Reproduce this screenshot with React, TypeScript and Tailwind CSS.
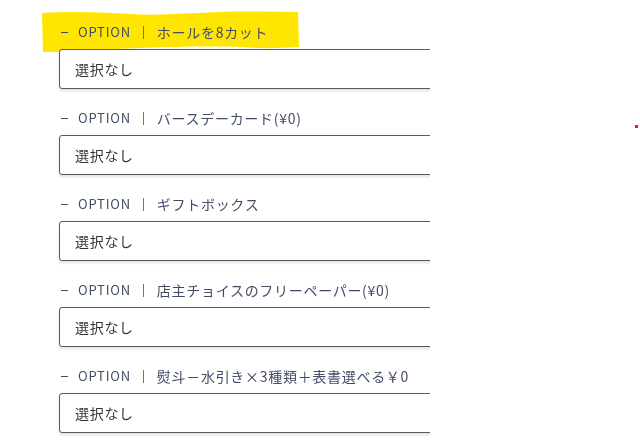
import React from 'react';

const options = [
  'ホールを8カット',
  'バースデーカード(¥0)',
  'ギフトボックス',
  '店主チョイスのフリーペーパー(¥0)',
  '熨斗－水引き×3種類＋表書選べる￥0',
];

const font = { fontFamily: '"Noto Sans CJK JP", "Noto Sans", sans-serif' };

function Highlight() {
  return (
    <svg
      className="absolute left-[40px] top-[9px] pointer-events-none mix-blend-multiply"
      width="262"
      height="46"
      viewBox="0 0 262 46"
    >
      <path
        d="M2 4 C 30 2, 60 3, 90 5 C 120 7, 150 4, 180 3 C 210 2, 240 3, 258 3 L 259 38 C 240 39, 225 40, 200 38 C 170 37, 130 38, 100 39 C 70 40, 40 42, 20 43 L 3 43 Z"
        fill="#ffe600"
      />
    </svg>
  );
}

export default function App() {
  return (
    <div className="relative w-[640px] h-[447px] bg-white overflow-hidden" style={font}>
      <Highlight />
      <div className="relative w-[430px] overflow-hidden pl-[59px] pt-[20px] flex flex-col gap-[17px] pb-4">
        {options.map((name) => (
          <div key={name} className="flex flex-col">
            <div className="h-[24px] pl-[2px] flex items-center text-[13px] tracking-[0.06em] text-[#414c66] whitespace-nowrap">
              <span className="inline-block w-[7px] h-[1px] bg-[#414c66]" />
              <span className="ml-[10px]">OPTION</span>
              <span className="ml-[12px] inline-block w-[1px] h-[13px] bg-[#6a7388]" />
              <span className="ml-[13px] text-[14px] tracking-[0.05em]">{name}</span>
            </div>
            <div className="mt-[5px] w-[520px] h-[40px] border border-[#5a5a5a] rounded-[3px] bg-white shadow-[0_2px_3px_rgba(0,0,0,0.12)] flex items-center pl-[15px] text-[14px] tracking-[0.05em] text-[#333]">
              選択なし
            </div>
          </div>
        ))}
      </div>
      <div className="absolute left-[635px] top-[125px] w-[3px] h-[3px] bg-[#f01c1c]" />
    </div>
  );
}
